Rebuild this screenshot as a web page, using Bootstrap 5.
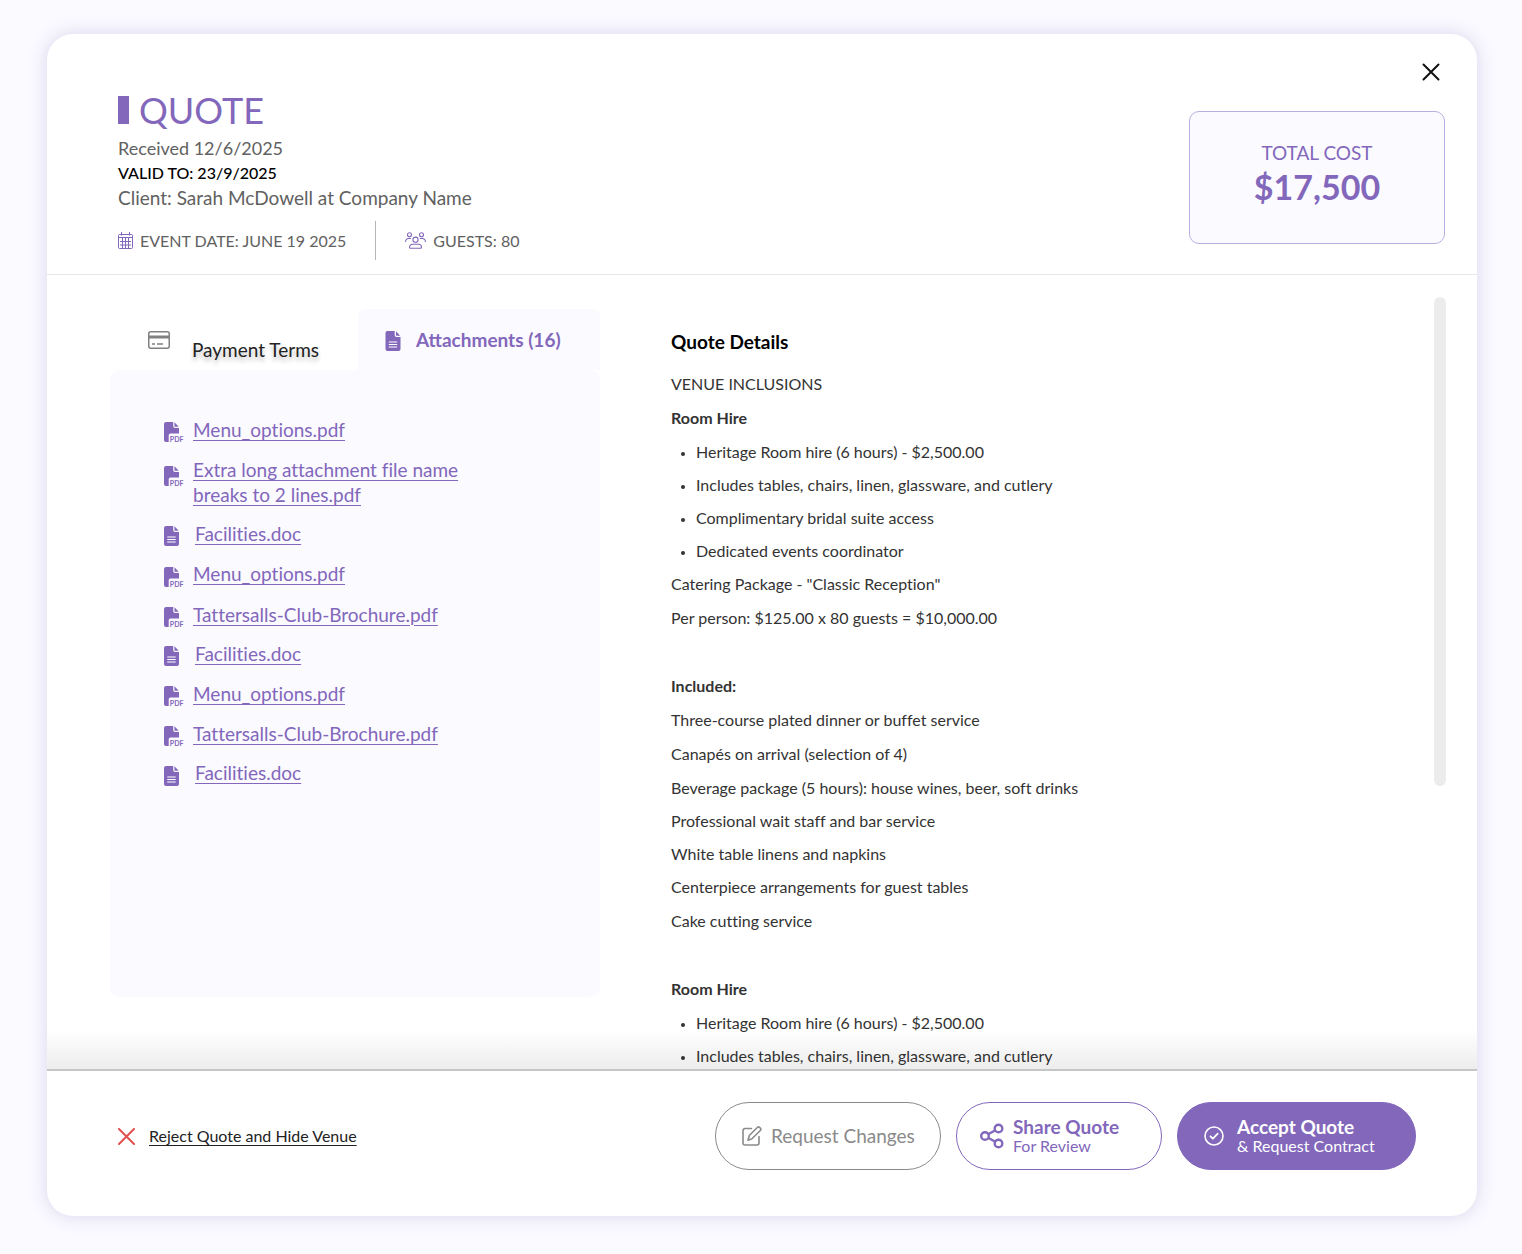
<!DOCTYPE html>
<html lang="en">
<head>
<meta charset="utf-8">
<meta name="viewport" content="width=device-width, initial-scale=1">
<title>Quote</title>
<link href="https://cdn.jsdelivr.net/npm/bootstrap@5.3.0/dist/css/bootstrap.min.css" rel="stylesheet">
<style>
:root { --violet: #8267bb; --violet-line: #b9afdf; --tint: #fbfaff; --ink: #333; --soft: #616161; --grey: #8a8a8a; }
body { font-family: Lato, "Open Sans", sans-serif; font-size: 16px; font-variant-ligatures: none; background: var(--tint); color: var(--ink); }
a { color: inherit; }
.text-violet { color: var(--violet); }
.text-soft { color: var(--soft); }
.quote-shell { height: 100vh; min-height: 900px; padding: 34px 45px 38px 47px; }
.quote-dialog { border-radius: 26px; box-shadow: 0 0 18px 2px #dfdbf0; overflow: hidden; }

.quote-head { padding: 0 32px 14px 71px; border-bottom: 1px solid #e6e6ec; }
.quote-intro { padding-top: 56px; }
.quote-title { font-size: 36px; line-height: 40px; gap: 10px; }
.quote-title::before { content: ""; width: 11px; height: 28px; background: var(--violet); }
.intro-lines { margin-top: 6px; }
.line-18 { font-size: 18px; line-height: 25px; }
.line-19 { font-size: 19px; line-height: 25px; }
.line-16 { font-size: 16px; line-height: 24px; }
.valid-to { font-weight: 500; color: #000; }
.meta-row { margin-top: 11px; }
.meta-item { height: 39px; gap: 7px; }
.meta-item + .meta-item { margin-left: 29px; padding-left: 29px; border-left: 1px solid #b5b5b5; }
.head-side { padding-top: 24px; gap: 25px; }
.icon-button { width: 28px; height: 28px; border: 0; background: none; padding: 0; color: #111; }
.cost-box { width: 256px; height: 133px; padding-top: 28px; border: 1px solid var(--violet-line); border-radius: 10px; background: var(--tint); }
.cost-value { font-size: 34px; line-height: 43px; }

.quote-body { min-height: 0; padding-left: 63px; padding-right: 31px; }
.files-side { width: 490px; padding-top: 34px; }
.tab-button { height: 61px; border: 0; background: none; font-size: 19px; }
.tab-terms { width: 248px; padding: 0 0 0 38px; gap: 22px; color: #222; }
.tab-terms span { padding-top: 22px; text-shadow: 0 4px 4px rgba(0, 0, 0, .25); }
.tab-files { padding: 2px 0 0 27px; gap: 15px; color: var(--violet); background: var(--tint); border-radius: 8px 8px 0 0; }
.files-panel { height: 627px; padding: 47px 54px; background: var(--tint); border-radius: 10px; }
.file-list { gap: 15px; }
.file-row { font-size: 19px; line-height: 25px; color: var(--violet); }
.file-row a { max-width: 280px; text-underline-offset: 3px; text-decoration-thickness: 1px; }
.file-icon { width: 29px; }
.file-row.is-doc { line-height: 24px; }
.file-row.is-doc .file-icon { width: 31px; }

.details { padding: 54px 0 0 71px; }
.details h2 { font-size: 19px; line-height: 26px; color: #000; margin-bottom: 12px; }
.details p, .details h3 { font-size: 16px; line-height: 34px; margin: 0; }
.details li, .details .tight-lines p { font-size: 16px; line-height: 33px; }
.details li::marker { font-size: 13px; }
.details ul { margin: 0; padding-left: 25px; }
.details .next-group { margin-top: 34px; }
.scroll-thumb { width: 12px; height: 489px; margin-top: 22px; border-radius: 6px; background: #ececec; }
.body-fade { height: 40px; background: linear-gradient(rgba(0, 0, 0, 0), rgba(0, 0, 0, .07)); pointer-events: none; }

.quote-foot { height: 147px; padding: 31px 61px 0 71px; border-top: 2px solid #c6c6c6; }
.reject { height: 68px; gap: 14px; color: #222; }
.reject a { text-underline-offset: 3px; text-decoration-thickness: 1px; }
.pill { height: 68px; border: 1px solid; border-radius: 34px; background: #fff; padding: 0 0 0 26px; text-align: left; }
.pill-edit { width: 226px; gap: 9px; color: var(--grey); font-size: 19px; }
.pill-share { width: 206px; gap: 9px; padding-left: 23px; color: var(--violet); }
.pill-accept { width: 239px; gap: 13px; background: var(--violet); border-color: var(--violet); color: #fff; }
.pill strong { display: block; font-size: 19px; line-height: 20px; }
.pill small { display: block; font-size: 16px; line-height: 18px; }
.foot-actions { gap: 15px; }
</style>
</head>
<body>
<svg class="d-none" aria-hidden="true">
  <symbol id="doc" viewBox="0 0 15 20">
    <path fill="currentColor" d="M2 0h7.200v4.200a1.800 1.800 0 0 0 1.800 1.800H15v12a2 2 0 0 1-2 2H2a2 2 0 0 1-2-2V2a2 2 0 0 1 2-2zM10.500.3 14.700 4.700h-4.200z"/>
    <path stroke="#fff" stroke-width="1.200" d="M3.300 11h8.400M3.300 13.500h8.400M3.300 16h8.400"/>
  </symbol>
  <symbol id="pdf" viewBox="0 0 20 20">
    <path fill="currentColor" d="M2 0h7.200v4.200A1.800 1.800 0 0 0 11 6h4v5.500H6.500A1.800 1.800 0 0 0 4.700 13v7H2a2 2 0 0 1-2-2V2a2 2 0 0 1 2-2zM10.500.3 14.700 4.700h-4.200z"/>
    <text x="5.800" y="19.500" font-family="Lato, sans-serif" font-weight="700" font-size="7" fill="currentColor">PDF</text>
  </symbol>
</svg>

<div class="quote-shell">
<main class="quote-dialog bg-white h-100 d-flex flex-column">

  <header class="quote-head d-flex justify-content-between">
    <div class="quote-intro">
      <h1 class="quote-title text-violet fw-normal d-flex align-items-center mb-0">QUOTE</h1>
      <div class="intro-lines">
        <div class="line-18 text-soft">Received 12/6/2025</div>
        <div class="line-16 valid-to">VALID TO: 23/9/2025</div>
        <div class="line-19 text-soft">Client: Sarah McDowell at Company Name</div>
      </div>
      <div class="meta-row d-flex text-soft">
        <div class="meta-item d-flex align-items-center">
          <svg width="15" height="17" viewBox="0 0 15 17" fill="none" stroke="#8267bb"><path d="M1.500 2.500h12a1 1 0 0 1 1 1v12a1 1 0 0 1-1 1h-12a1 1 0 0 1-1-1v-12a1 1 0 0 1 1-1zM.5 5.500h14M3.500 0v3.500M11.500 0v3.500M2 9.500h11M2 13h11M4.500 6v10M7.500 6v10M10.500 6v10"/></svg>
          <span>EVENT DATE: JUNE 19 2025</span>
        </div>
        <div class="meta-item d-flex align-items-center">
          <svg width="21" height="17" viewBox="0 0 21 17" fill="none" stroke="#8267bb" stroke-width="1.100" stroke-linecap="round"><circle cx="4.500" cy="2.700" r="2"/><circle cx="16.500" cy="2.700" r="2"/><circle cx="10.500" cy="7.700" r="2.600"/><path d="M4.500 15.200a3 3 0 0 1 3-3h6a3 3 0 0 1 3 3 1 1 0 0 1-1 1h-10a1 1 0 0 1-1-1zM.6 9.500a3 3 0 0 1 3-3h2M20.400 9.500a3 3 0 0 0-3-3h-2"/></svg>
          <span>GUESTS: 80</span>
        </div>
      </div>
    </div>
    <div class="head-side d-flex flex-column align-items-end">
      <button type="button" class="icon-button d-flex align-items-center justify-content-center" aria-label="Close">
        <svg width="18" height="18" viewBox="0 0 18 18" fill="none" stroke="currentColor" stroke-width="2" stroke-linecap="round"><path d="m1.500 1.500 15 15m0-15-15 15"/></svg>
      </button>
      <div class="cost-box text-center text-violet">
        <div class="line-19">TOTAL COST</div>
        <div class="cost-value fw-bold">$17,500</div>
      </div>
    </div>
  </header>

  <div class="quote-body position-relative flex-grow-1 d-flex overflow-hidden">
    <section class="files-side flex-shrink-0">
      <div class="d-flex" role="tablist">
        <button type="button" role="tab" aria-selected="false" class="tab-button tab-terms d-flex align-items-center">
          <svg width="22" height="18" viewBox="0 0 22 18" fill="none" stroke="#808080" stroke-width="1.500"><rect x=".75" y=".75" width="20.500" height="16.500" rx="2"/><path stroke-width="3" d="M1 6h20"/><path d="M4 13h3m2 0h6"/></svg>
          <span>Payment Terms</span>
        </button>
        <button type="button" role="tab" aria-selected="true" class="tab-button tab-files fw-bold d-flex align-items-center flex-grow-1">
          <svg width="16" height="20"><use href="#doc"/></svg>
          <span>Attachments (16)</span>
        </button>
      </div>
      <div class="files-panel" role="tabpanel">
        <ul class="file-list list-unstyled d-flex flex-column mb-0">
          <li class="file-row d-flex"><span class="file-icon flex-shrink-0"><svg width="20" height="20"><use href="#pdf"/></svg></span><a href="#">Menu_options.pdf</a></li>
          <li class="file-row d-flex"><span class="file-icon flex-shrink-0 pt-1"><svg width="20" height="20"><use href="#pdf"/></svg></span><a href="#">Extra long attachment file name breaks to 2 lines.pdf</a></li>
          <li class="file-row is-doc d-flex"><span class="file-icon flex-shrink-0"><svg width="15" height="20"><use href="#doc"/></svg></span><a href="#">Facilities.doc</a></li>
          <li class="file-row d-flex"><span class="file-icon flex-shrink-0"><svg width="20" height="20"><use href="#pdf"/></svg></span><a href="#">Menu_options.pdf</a></li>
          <li class="file-row d-flex"><span class="file-icon flex-shrink-0"><svg width="20" height="20"><use href="#pdf"/></svg></span><a href="#">Tattersalls-Club-Brochure.pdf</a></li>
          <li class="file-row is-doc d-flex"><span class="file-icon flex-shrink-0"><svg width="15" height="20"><use href="#doc"/></svg></span><a href="#">Facilities.doc</a></li>
          <li class="file-row d-flex"><span class="file-icon flex-shrink-0"><svg width="20" height="20"><use href="#pdf"/></svg></span><a href="#">Menu_options.pdf</a></li>
          <li class="file-row d-flex"><span class="file-icon flex-shrink-0"><svg width="20" height="20"><use href="#pdf"/></svg></span><a href="#">Tattersalls-Club-Brochure.pdf</a></li>
          <li class="file-row is-doc d-flex"><span class="file-icon flex-shrink-0"><svg width="15" height="20"><use href="#doc"/></svg></span><a href="#">Facilities.doc</a></li>
        </ul>
      </div>
    </section>

    <section class="details flex-grow-1">
      <h2 class="fw-bold">Quote Details</h2>
      <p>VENUE INCLUSIONS</p>
      <h3 class="fw-bold">Room Hire</h3>
      <ul>
        <li>Heritage Room hire (6 hours) - $2,500.00</li>
        <li>Includes tables, chairs, linen, glassware, and cutlery</li>
        <li>Complimentary bridal suite access</li>
        <li>Dedicated events coordinator</li>
      </ul>
      <p>Catering Package - "Classic Reception"</p>
      <p>Per person: $125.00 x 80 guests = $10,000.00</p>
      <h3 class="fw-bold next-group">Included:</h3>
      <p>Three-course plated dinner or buffet service</p>
      <p>Canapés on arrival (selection of 4)</p>
      <div class="tight-lines">
        <p>Beverage package (5 hours): house wines, beer, soft drinks</p>
        <p>Professional wait staff and bar service</p>
        <p>White table linens and napkins</p>
      </div>
      <p>Centerpiece arrangements for guest tables</p>
      <p>Cake cutting service</p>
      <h3 class="fw-bold next-group">Room Hire</h3>
      <ul>
        <li>Heritage Room hire (6 hours) - $2,500.00</li>
        <li>Includes tables, chairs, linen, glassware, and cutlery</li>
      </ul>
    </section>
    <div class="scroll-thumb flex-shrink-0"></div>
    <div class="body-fade position-absolute bottom-0 start-0 w-100"></div>
  </div>

  <footer class="quote-foot d-flex justify-content-between flex-shrink-0">
    <div class="reject d-flex align-items-center">
      <svg width="17" height="17" viewBox="0 0 17 17" fill="none" stroke="#e2504f" stroke-width="2" stroke-linecap="round"><path d="m1 1 15 15M16 1 1 16"/></svg>
      <a href="#">Reject Quote and Hide Venue</a>
    </div>
    <div class="foot-actions d-flex">
      <button type="button" class="pill pill-edit d-flex align-items-center">
        <svg width="20" height="20" viewBox="0 0 20 20" fill="none" stroke="currentColor" stroke-width="1.600" stroke-linejoin="round" stroke-linecap="round"><path d="M9.500 2.500H3a2 2 0 0 0-2 2V17a2 2 0 0 0 2 2h12a2 2 0 0 0 2-2v-6.500"/><path d="M15.300 1.500a1.700 1.700 0 0 1 2.400 0l.6.600a1.700 1.700 0 0 1 0 2.400L10 12.800 6 14.200l1.300-4.700z"/></svg>
        <span>Request Changes</span>
      </button>
      <button type="button" class="pill pill-share d-flex align-items-center">
        <svg width="24" height="26" viewBox="0 0 24 26" fill="none" stroke="currentColor" stroke-width="2.400"><circle cx="5" cy="13" r="3.800"/><circle cx="18.500" cy="5.500" r="3.800"/><circle cx="18.500" cy="20.500" r="3.800"/><path d="m8.500 11 6.500-3.500M8.500 15l6.500 3.500"/></svg>
        <span><strong>Share Quote</strong><small>For Review</small></span>
      </button>
      <button type="button" class="pill pill-accept d-flex align-items-center">
        <svg width="20" height="20" viewBox="0 0 20 20" fill="none" stroke="currentColor" stroke-width="1.600" stroke-linecap="round" stroke-linejoin="round"><circle cx="10" cy="10" r="9"/><path stroke-width="1.800" d="m6.500 10.300 2.400 2.400 4.800-5"/></svg>
        <span><strong>Accept Quote</strong><small>&amp; Request Contract</small></span>
      </button>
    </div>
  </footer>
</main>
</div>
<script src="https://cdn.jsdelivr.net/npm/bootstrap@5.3.0/dist/js/bootstrap.bundle.min.js"></script>
</body>
</html>
